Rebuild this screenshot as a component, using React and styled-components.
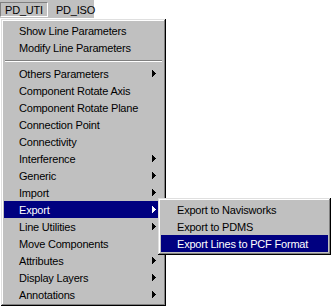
import React from "react";
import styled, { createGlobalStyle } from "styled-components";

const GlobalStyle = createGlobalStyle`
  html, body {
    margin: 0;
    padding: 0;
    background: #ffffff;
  }
  body {
    font-family: "Liberation Sans", Arial, sans-serif;
    font-size: 11px;
    letter-spacing: -0.2px;
    color: #000000;
  }
`;

const Screen = styled.div`
  position: relative;
  width: 333px;
  height: 306px;
  overflow: hidden;
`;

const MenuBar = styled.div`
  display: flex;
  align-items: center;
  gap: 3px;
  width: 94px;
  height: 18px;
  background: #c0c0c0;
  box-sizing: border-box;
`;

const MenuTitle = styled.div`
  height: 15px;
  display: flex;
  align-items: center;
  padding: 0 4px;
  box-sizing: border-box;
  border: 1px solid;
  border-color: ${p => (p.$pressed ? "#808080 #ffffff #ffffff #808080" : "transparent")};
  margin-top: 1px;
`;

const Popup = styled.div`
  background: #c0c0c0;
  box-sizing: border-box;
  padding: 3px;
  box-shadow: inset -1px -1px #000000, inset 1px 1px #dfdfdf,
    inset -2px -2px #808080, inset 2px 2px #ffffff;
`;

const MainMenu = styled(Popup)`
  width: 165px;
  margin: 1px 0 0 1px;
`;

const SubMenu = styled(Popup)`
  position: absolute;
  left: 158px;
  top: 198px;
  width: 173px;
`;

const Item = styled.div`
  display: flex;
  align-items: center;
  height: 17px;
  padding: 0 7px 0 ${p => p.$indent}px;
  white-space: nowrap;
  background: ${p => (p.$active ? "#000080" : "transparent")};
  color: ${p => (p.$active ? "#ffffff" : "#000000")};
`;

const Arrow = styled.svg`
  margin-left: auto;
  display: block;
`;

const Separator = styled.div`
  height: 0;
  margin: 4px 1px 3px;
  border-top: 1px solid #808080;
  border-bottom: 1px solid #ffffff;
`;

function SubArrow() {
  return (
    <Arrow width="4" height="7" viewBox="0 0 4 7" shapeRendering="crispEdges">
      <path d="M0 0h1v7H0z M1 1h1v5H1z M2 2h1v3H2z M3 3h1v1H3z" fill="currentColor" />
    </Arrow>
  );
}

const mainItems = [
  { label: "Show Line Parameters" },
  { label: "Modify Line Parameters" },
  { separator: true },
  { label: "Others Parameters", sub: true },
  { label: "Component Rotate Axis" },
  { label: "Component Rotate Plane" },
  { label: "Connection Point" },
  { label: "Connectivity" },
  { label: "Interference", sub: true },
  { label: "Generic", sub: true },
  { label: "Import", sub: true },
  { label: "Export", sub: true, active: true },
  { label: "Line Utilities", sub: true },
  { label: "Move Components" },
  { label: "Attributes", sub: true },
  { label: "Display Layers", sub: true },
  { label: "Annotations", sub: true }
];

const exportItems = [
  { label: "Export to Navisworks" },
  { label: "Export to PDMS" },
  { label: "Export Lines to PCF Format", active: true }
];

export default function App() {
  return (
    <>
      <GlobalStyle />
      <Screen>
        <MenuBar>
          <MenuTitle $pressed>PD_UTI</MenuTitle>
          <MenuTitle>PD_ISO</MenuTitle>
        </MenuBar>
        <MainMenu>
          {mainItems.map((item, i) =>
            item.separator ? (
              <Separator key={i} />
            ) : (
              <Item key={i} $indent={15} $active={item.active}>
                {item.label}
                {item.sub && <SubArrow />}
              </Item>
            )
          )}
        </MainMenu>
        <SubMenu>
          {exportItems.map((item, i) => (
            <Item key={i} $indent={16} $active={item.active}>
              {item.label}
            </Item>
          ))}
        </SubMenu>
      </Screen>
    </>
  );
}
